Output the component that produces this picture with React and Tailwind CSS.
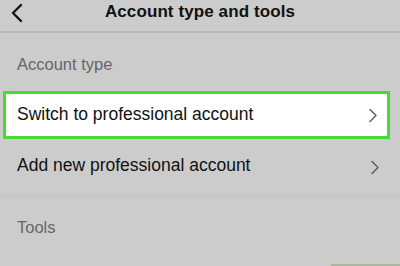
import React from 'react';

const Chevron = () => (
  <svg width="10" height="15" viewBox="0 0 10 15" className="text-[#5a5a5a]">
    <path d="M2 1.5 L8 7.5 L2 13.5" fill="none" stroke="currentColor" strokeWidth="1.4" strokeLinecap="round" strokeLinejoin="round" />
  </svg>
);

const App = () => {
  return (
    <div
      className="w-[400px] h-[266px] bg-[#cccccc] overflow-hidden flex flex-col relative"
      style={{ fontFamily: '"Liberation Sans", Arial, sans-serif' }}
    >
      {/* header */}
      <div className="relative h-[33px] flex items-center justify-center border-b-2 border-[#bcbcbc]">
        <svg width="16" height="20" viewBox="0 0 16 20" className="absolute left-[8px] top-[3px] text-[#111]">
          <path d="M13 2 L5 10 L13 18" fill="none" stroke="currentColor" strokeWidth="2.4" strokeLinecap="round" strokeLinejoin="round" />
        </svg>
        <div className="text-[17px] font-bold text-[#111] -mt-[8px] tracking-[0.1px]">Account type and tools</div>
      </div>

      {/* account type label */}
      <div className="h-[58px] flex items-center px-[17px] pt-[4px]">
        <span className="text-[16.5px] text-[#666666]">Account type</span>
      </div>

      {/* highlighted row */}
      <div className="ml-[3px] w-[387px] h-[48px] bg-white border-[3px] border-[#45dc34] flex items-center justify-between pl-[11px] pr-[9px]">
        <span className="text-[17.5px] text-[#111] -mt-[1px]">Switch to professional account</span>
        <Chevron />
      </div>

      {/* second row */}
      <div className="h-[56px] flex items-center justify-between pl-[17px] pr-[20px]">
        <span className="text-[17.5px] text-[#111] -mt-[4px]">Add new professional account</span>
        <Chevron />
      </div>

      <div className="h-[4px] bg-gradient-to-b from-[#c6c6c6] to-[#cacaca]" />

      {/* tools label */}
      <div className="h-[60px] flex items-center px-[17px]">
        <span className="text-[16.5px] text-[#666666] -mt-[3px]">Tools</span>
      </div>

      <div className="absolute left-[331px] top-[264px] w-[69px] h-[2px] bg-[#a9b89c]" />
    </div>
  );
};

export default App;
